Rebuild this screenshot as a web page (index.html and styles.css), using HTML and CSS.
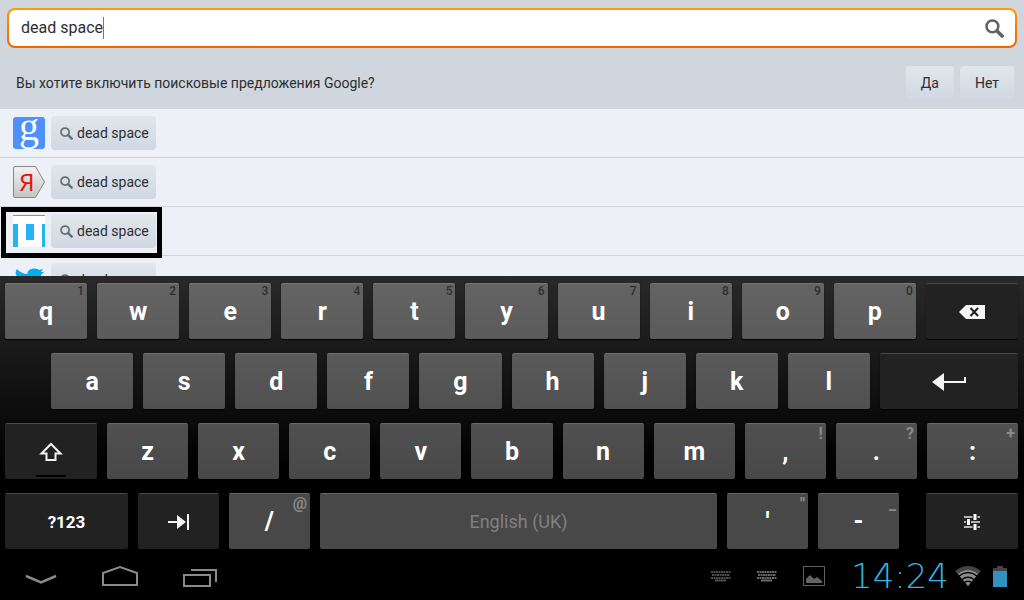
FILE: index.html
```html
<!DOCTYPE html>
<html lang="ru">
<head>
    <meta charset="UTF-8">
    <meta name="viewport" content="width=device-width, initial-scale=1.0">
    <title>dead space</title>
    <link rel="stylesheet" href="styles.css">
</head>
<body>
    <svg class="sprite" aria-hidden="true">
        <symbol id="lupa" viewBox="0 0 18 18">
            <circle cx="7" cy="7" r="5.6" fill="none" stroke="currentColor" stroke-width="2.4"/>
            <path d="M11.2 11.2L16.2 16.2" stroke="currentColor" stroke-width="3.4" stroke-linecap="round"/>
        </symbol>
        <symbol id="keys" viewBox="0 0 20 12">
            <path d="M0 2H20M1 5H19M0 8H20" stroke="currentColor" stroke-width="2" stroke-dasharray="2 .5"/>
            <path d="M4 10.5H15" stroke="currentColor" stroke-width="2"/>
        </symbol>
    </svg>

    <main class="browser">
        <header class="top">
            <form class="search">
                <label class="hidden" for="query">Поиск</label>
                <input type="text" id="query" value="dead space" autocomplete="off" spellcheck="false">
                <span class="caret"></span>
                <button type="button" class="go" aria-label="Найти"><svg width="19" height="19"><use href="#lupa"/></svg></button>
            </form>
            <div class="prompt">
                <p>Вы хотите включить поисковые предложения Google?</p>
                <button class="soft">Да</button>
                <button class="soft">Нет</button>
            </div>
        </header>
        <ul class="engines">
            <li>
                <span class="logo google">g</span>
                <button class="soft hint"><svg width="13" height="13"><use href="#lupa"/></svg>dead space</button>
            </li>
            <li>
                <span class="logo yandex">
                    <svg width="32" height="32" viewBox="0 0 32 32">
                        <defs><linearGradient id="grey" x2="0" y2="1"><stop stop-color="#f2f2f2"/><stop offset="1" stop-color="#c4c4c4"/></linearGradient></defs>
                        <path d="M2 .5H22.5L31.5 16L22.5 31.5H2Q.5 31.5 .5 30V2Q.5 .5 2 .5Z" fill="url(#grey)" stroke="#85878a"/>
                    </svg>
                    <b>Я</b>
                </span>
                <button class="soft hint"><svg width="13" height="13"><use href="#lupa"/></svg>dead space</button>
            </li>
            <li class="marked">
                <span class="logo">
                    <svg width="32" height="32" viewBox="0 0 32 32" shape-rendering="crispEdges">
                        <path fill="#fff" d="M0 0H32V32H0Z"/>
                        <path fill="#22b5f3" d="M0 0H32V1H0ZM0 9H5V32H0ZM13 9H21V25H13ZM29 9H32V32H29Z"/>
                    </svg>
                </span>
                <button class="soft hint"><svg width="13" height="13"><use href="#lupa"/></svg>dead space</button>
            </li>
            <li>
                <span class="logo">
                    <svg width="32" height="32" viewBox="0 0 32 32">
                        <path fill="#07aced" d="M4 5C7 8.500 11 10 14.500 10C14 7 17 4.500 21 4.500C23 4.500 25 5 26 6L30 5L28 8L31 8L28 11C29 20 22 29 12 29C8 29 4 28 1 26C5 26 8 25 10 23C7 23 5 21 4 19H7C4 18 2 15 2 12L5 13C2 11 2 8 4 5Z"/>
                    </svg>
                </span>
                <button class="soft hint"><svg width="13" height="13"><use href="#lupa"/></svg>dead space</button>
            </li>
        </ul>
    </main>

    <section class="keyboard">
        <div class="row top-row">
            <button class="k82">q<sup>1</sup></button>
            <button class="k82">w<sup>2</sup></button>
            <button class="k82">e<sup>3</sup></button>
            <button class="k82">r<sup>4</sup></button>
            <button class="k82">t<sup>5</sup></button>
            <button class="k82">y<sup>6</sup></button>
            <button class="k82">u<sup>7</sup></button>
            <button class="k82">i<sup>8</sup></button>
            <button class="k82">o<sup>9</sup></button>
            <button class="k82">p<sup>0</sup></button>
            <button class="k92 dark" aria-label="Backspace">
                <svg width="28" height="14" viewBox="0 0 28 14">
                    <path d="M1 7L8 0H27V14H8Z" fill="#f4f4f4"/>
                    <path d="M12.500 3L20 11M20 3L12.500 11" stroke="#222" stroke-width="2"/>
                </svg>
            </button>
        </div>
        <div class="row second-row">
            <span class="k36"></span>
            <button class="k82">a</button>
            <button class="k82">s</button>
            <button class="k82">d</button>
            <button class="k82">f</button>
            <button class="k82">g</button>
            <button class="k82">h</button>
            <button class="k82">j</button>
            <button class="k82">k</button>
            <button class="k82">l</button>
            <button class="k138 dark" aria-label="Enter">
                <svg width="36" height="18" viewBox="0 0 36 18">
                    <path d="M1 9L13 0V18Z" fill="#f4f4f4"/>
                    <path d="M12 9H34V4" fill="none" stroke="#f4f4f4" stroke-width="2"/>
                </svg>
            </button>
        </div>
        <div class="row third-row">
            <button class="k92 dark shift" aria-label="Shift">
                <svg width="24" height="20" viewBox="0 0 24 20">
                    <path d="M12 2L21.500 11.500H16.500V18H7.500V11.500H2.500Z" fill="none" stroke="#f4f4f4" stroke-width="2"/>
                </svg>
            </button>
            <button class="k81">z</button>
            <button class="k81">x</button>
            <button class="k81">c</button>
            <button class="k81">v</button>
            <button class="k81">b</button>
            <button class="k81">n</button>
            <button class="k81">m</button>
            <button class="k81">,<sup>!</sup></button>
            <button class="k81">.<sup>?</sup></button>
            <button class="k91">:<sup>+</sup></button>
        </div>
        <div class="row fourth-row">
            <button class="k123 dark small">?123</button>
            <button class="k81 dark" aria-label="Tab">
                <svg width="22" height="18" viewBox="0 0 22 18">
                    <path d="M0 9H10M20 1V17" stroke="#f4f4f4" stroke-width="2"/>
                    <path d="M9 2L18 9L9 16Z" fill="#f4f4f4"/>
                </svg>
            </button>
            <button class="k81">/<sup>@</sup></button>
            <button class="k397 space">English (UK)</button>
            <button class="k81">'<sup>"</sup></button>
            <button class="k81">-<sup>_</sup></button>
            <span class="k7"></span>
            <button class="k92 dark" aria-label="Settings">
                <svg width="18" height="16" viewBox="0 0 18 16">
                    <path d="M1 3H17M1 8H17M1 13H17" stroke="#b5b5b5" stroke-width="2"/>
                    <path d="M12 0V6M5.500 5V11M12 10V16" stroke="#222" stroke-width="5"/>
                    <path d="M12 0V6M5.500 5V11M12 10V16" stroke="#fff" stroke-width="3"/>
                </svg>
            </button>
        </div>
    </section>

    <footer class="system">
        <nav>
            <button aria-label="Hide">
                <svg width="32" height="24" viewBox="0 0 32 24"><path d="M1 12L16 18.500L31 12" fill="none" stroke="#8a8a8a" stroke-width="2.500"/></svg>
            </button>
            <button aria-label="Home">
                <svg width="36" height="24" viewBox="0 0 36 24"><path d="M1 21V9L18 3L35 9V21Z" fill="none" stroke="#8a8a8a" stroke-width="2"/></svg>
            </button>
            <button aria-label="Recent">
                <svg width="34" height="24" viewBox="0 0 34 24"><path d="M1 11H27V22H1ZM8 6H33V18" fill="none" stroke="#8a8a8a" stroke-width="2"/></svg>
            </button>
        </nav>
        <div class="status">
            <svg class="kbd" width="20" height="12"><use href="#keys"/></svg>
            <svg class="kbd light" width="20" height="12"><use href="#keys"/></svg>
            <svg class="photo" width="22" height="20" viewBox="0 0 22 20">
                <path d="M.5 .5H21.500V19.500H.5Z" fill="none" stroke="#636363"/>
                <path d="M3 17V13L7 9L11 13L14 11L19 15V17Z" fill="#636363"/>
            </svg>
            <time>14:24</time>
            <svg width="26" height="20" viewBox="0 0 26 20">
                <path d="M0 5Q13-5 26 5L13 20Z" fill="#444"/>
                <path d="M3 8Q13 0 23 8L13 20Z" fill="#8c8c8c"/>
                <path d="M4 10Q13 3 22 10M7 13.500Q13 9 19 13.500M9.500 16.500Q13 14 16.500 16.500" fill="none" stroke="#000" stroke-width="1.300"/>
            </svg>
            <svg width="14" height="21" viewBox="0 0 14 21">
                <path d="M0 2H4V0H10V2H14V5H0Z" fill="#444"/>
                <path d="M0 5H14V21H0Z" fill="#3391bd"/>
            </svg>
        </div>
    </footer>
</body>
</html>
```
FILE: styles.css
```css
* {
    box-sizing: border-box;
}
body {
    margin: 0;
    height: 100vh;
    display: flex;
    flex-direction: column;
    font-family: Roboto, "Liberation Sans", sans-serif;
    background: #000;
    color: #2c2e30;
}
button {
    font-family: inherit;
    border: none;
    padding: 0;
    color: inherit;
}
svg {
    display: block;
}
.sprite {
    position: absolute;
    width: 0;
    height: 0;
}
.hidden {
    position: absolute;
    width: 1px;
    height: 1px;
    overflow: hidden;
    clip-path: inset(50%);
}

/* browser */
.browser {
    flex: 1;
    min-height: 0;
    overflow: hidden;
    background: #edf1f7;
}
.top {
    background: #cfd6de;
    padding: 8px 7px 10px;
}
.search {
    display: flex;
    align-items: center;
    height: 40px;
    padding: 0 11px 0 12px;
    border: 2px solid transparent;
    border-radius: 8px;
    background: linear-gradient(#fff, #fff) padding-box, linear-gradient(#ff9a05, #f06400) border-box;
}
.search input {
    field-sizing: content;
    max-width: 90%;
    height: 24px;
    border: none;
    outline: none;
    padding: 0;
    background: none;
    font: 16px/24px Roboto, sans-serif;
    color: #2c2e30;
    caret-color: transparent;
}
.caret {
    width: 1px;
    height: 22px;
    background: #777;
}
.go {
    margin-left: auto;
    background: none;
    color: #5f6367;
}
.prompt {
    display: flex;
    align-items: center;
    gap: 6px;
    margin-top: 18px;
    padding: 0 3px 0 9px;
    font-size: 14px;
}
.prompt p {
    flex: 1;
    margin: 0;
}
.soft {
    height: 33px;
    padding: 0 15px;
    border-radius: 4px;
    background: linear-gradient(#e1e6eb, #d1d8e2);
    font-size: 14px;
}
.engines {
    list-style: none;
    margin: 0;
    padding: 0;
}
.engines li {
    position: relative;
    display: flex;
    align-items: center;
    gap: 6px;
    height: 49px;
    padding-left: 13px;
    border-bottom: 1px solid #cfd4dc;
}
.hint {
    display: flex;
    align-items: center;
    gap: 4px;
    height: 34px;
    padding: 0 7px 0 9px;
}
.hint svg {
    color: #6a6e73;
}
.logo {
    position: relative;
    width: 32px;
    height: 32px;
}
.google {
    border-radius: 3px;
    background: #4d90fe;
    color: #fff;
    font: 40px/20px "Liberation Serif", serif;
    text-align: center;
}
.yandex b {
    position: absolute;
    inset: 0 4px 0 0;
    font: 24px/32px "Liberation Sans Narrow", "Noto Sans", sans-serif;
    text-align: center;
    color: #e3150c;
}
.marked::after {
    content: "";
    box-sizing: border-box;
    position: absolute;
    left: 1px;
    top: 0;
    width: 161px;
    height: 51px;
    border: 5px solid #000;
    z-index: 1;
}

/* keyboard */
.keyboard {
    display: flex;
    flex-direction: column;
    gap: 14px;
    padding: 7px 6px 3px 5px;
    background: linear-gradient(#292929, #000 70%);
}
.row {
    display: flex;
    gap: 10px;
}
.row button {
    position: relative;
    display: flex;
    align-items: center;
    justify-content: center;
    min-width: 0;
    height: 56px;
    border-top: 1px solid #ffffff2e;
    border-radius: 2px;
    box-shadow: 0 1px 1px #000;
    color: #fff;
    font-size: 25px;
    font-weight: bold;
}
.top-row button {
    background: linear-gradient(#646464, #5a5a5a);
}
.second-row button {
    background: linear-gradient(#5a5a5a, #505050);
}
.third-row button {
    background: linear-gradient(#505050, #484848);
}
.fourth-row button {
    background: #484848;
}
.row .dark {
    background: #222;
}
.row .small {
    font-size: 17px;
}
.row .space {
    font-size: 18px;
    font-weight: normal;
    color: #808080;
}
.row sup {
    position: absolute;
    top: 0;
    right: 3px;
    font-size: 16px;
    line-height: 20px;
    color: #8a8a8a;
}
.top-row sup {
    font-size: 12px;
    line-height: 14px;
    font-weight: 500;
    color: #2e2e2e;
}
.shift::after {
    content: "";
    position: absolute;
    bottom: 2px;
    width: 30px;
    height: 2px;
    background: #000;
}
.k7 { flex: 7 1 0; }
.k36 { flex: 36 1 0; }
.k81 { flex: 81 1 0; }
.k82 { flex: 82 1 0; }
.k91 { flex: 91 1 0; }
.k92 { flex: 92 1 0; }
.k123 { flex: 123 1 0; }
.k138 { flex: 138 1 0; }
.k397 { flex: 397 1 0; }

/* system bar */
.system {
    display: flex;
    justify-content: space-between;
    align-items: center;
    height: 48px;
    padding: 0 17px 0 25px;
}
.system nav {
    display: flex;
    gap: 45px;
}
.system nav button {
    background: none;
}
.status {
    display: flex;
    align-items: center;
    gap: 12px;
}
.kbd {
    color: #4c4c4c;
    margin-right: 14px;
}
.light {
    color: #686868;
}
.photo {
    margin-right: 14px;
}
.status time {
    margin-right: -6px;
    font: 200 34px/40px "DejaVu Sans", "DejaVu Sans Light", sans-serif;
    color: #33b5e5;
}
```
